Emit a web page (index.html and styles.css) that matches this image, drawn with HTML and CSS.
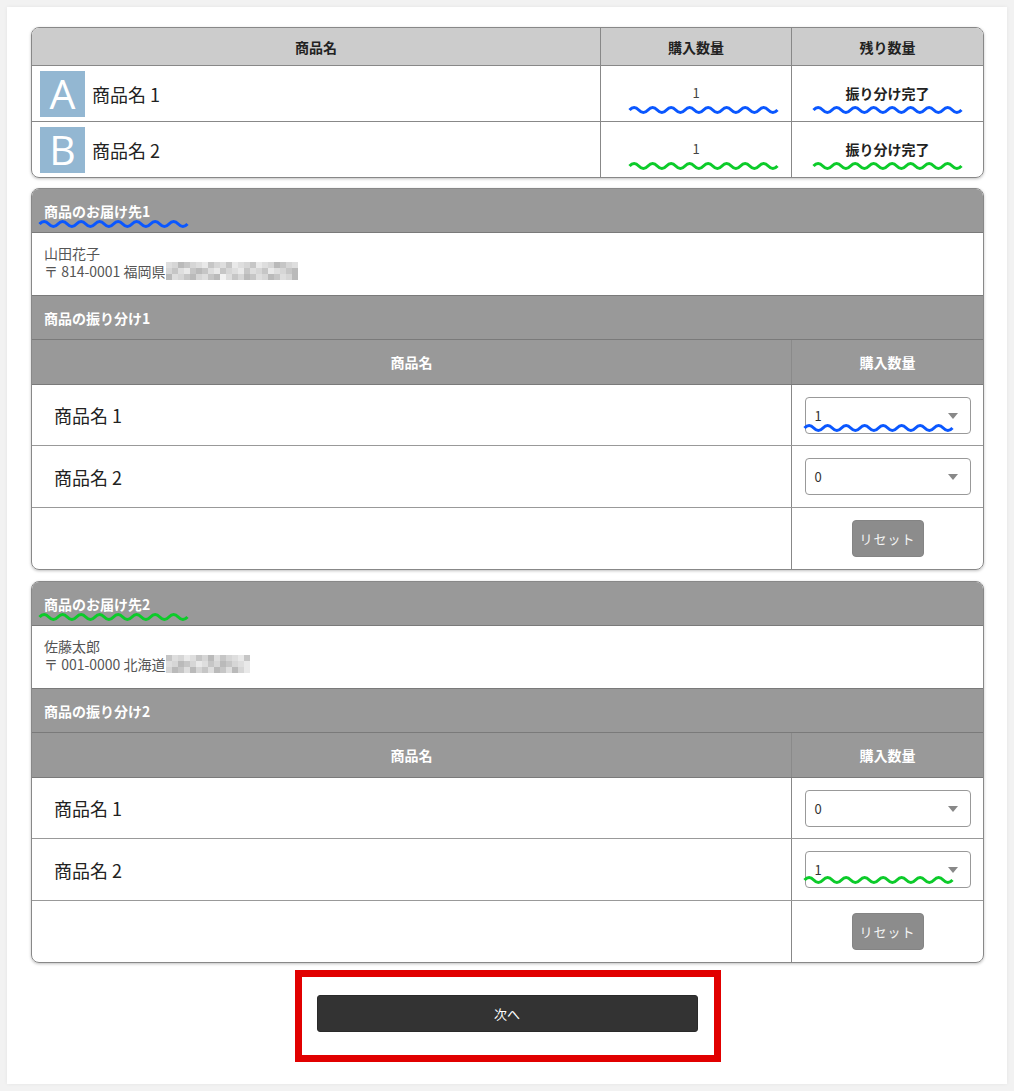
FILE: index.html
```html
<!DOCTYPE html>
<html lang="ja">
<head>
    <meta charset="UTF-8">
    <title>商品の振り分け</title>
    <link rel="stylesheet" href="styles.css">
</head>
<body>
    <svg class="defs" width="0" height="0">
        <symbol id="wave" viewBox="0 0 151 8">
            <path d="M1.5 4q4.6-5 9.25 0t9.25 0t9.25 0t9.25 0t9.25 0t9.25 0t9.25 0t9.25 0t9.25 0t9.25 0t9.25 0t9.25 0t9.25 0t9.25 0t9.25 0t9.25 0" fill="none" stroke="currentColor" stroke-width="3"/>
        </symbol>
    </svg>

    <div class="page">
        <!-- summary of purchased items -->
        <div class="box summary">
            <div class="srow shead">
                <div>商品名</div>
                <div>購入数量</div>
                <div>残り数量</div>
            </div>
            <div class="srow">
                <div class="item"><span class="badge">A</span>商品名 1</div>
                <div class="num">1<svg class="wave blue w-sum"><use href="#wave"/></svg></div>
                <div class="done">振り分け完了<svg class="wave blue w-done"><use href="#wave"/></svg></div>
            </div>
            <div class="srow">
                <div class="item"><span class="badge">B</span>商品名 2</div>
                <div class="num">1<svg class="wave green w-sum"><use href="#wave"/></svg></div>
                <div class="done">振り分け完了<svg class="wave green w-done"><use href="#wave"/></svg></div>
            </div>
        </div>

        <!-- destination 1 -->
        <div class="box card">
            <div class="card-head">商品のお届け先1<svg class="wave blue w-head"><use href="#wave"/></svg></div>
            <div class="address">
                山田花子<br>
                〒 814-0001 福岡県<span class="mosaic m22">
                    <i class="c"></i><i class="a"></i><i class="d"></i><i class="b"></i><i class="a"></i><i class="c"></i><i class="e"></i><i class="b"></i><i class="a"></i><i class="c"></i><i class="b"></i><i class="e"></i><i class="c"></i><i class="a"></i><i class="b"></i><i class="e"></i><i class="c"></i><i class="a"></i><i class="d"></i><i class="b"></i><i class="a"></i><i class="c"></i>
                    <i class="a"></i><i class="b"></i><i class="c"></i><i class="e"></i><i class="b"></i><i class="d"></i><i class="b"></i><i class="c"></i><i class="e"></i><i class="b"></i><i class="a"></i><i class="c"></i><i class="e"></i><i class="b"></i><i class="c"></i><i class="a"></i><i class="b"></i><i class="e"></i><i class="c"></i><i class="a"></i><i class="b"></i><i class="d"></i>
                    <i class="d"></i><i class="c"></i><i class="a"></i><i class="b"></i><i class="d"></i><i class="a"></i><i class="c"></i><i class="b"></i><i class="d"></i><i class="f"></i><i class="c"></i><i class="b"></i><i class="a"></i><i class="d"></i><i class="b"></i><i class="c"></i><i class="a"></i><i class="d"></i><i class="b"></i><i class="c"></i><i class="a"></i><i class="d"></i>
                </span>
            </div>
            <div class="card-head">商品の振り分け1</div>
            <div class="arow ahead">
                <div>商品名</div>
                <div>購入数量</div>
            </div>
            <div class="arow first">
                <div class="name">商品名 1</div>
                <div class="qty"><div class="select">1<span class="caret"></span></div><svg class="wave blue w-sel"><use href="#wave"/></svg></div>
            </div>
            <div class="arow">
                <div class="name">商品名 2</div>
                <div class="qty"><div class="select">0<span class="caret"></span></div></div>
            </div>
            <div class="arow">
                <div class="name"></div>
                <div class="qty"><button class="reset" type="button">リセット</button></div>
            </div>
        </div>

        <!-- destination 2 -->
        <div class="box card">
            <div class="card-head">商品のお届け先2<svg class="wave green w-head"><use href="#wave"/></svg></div>
            <div class="address">
                佐藤太郎<br>
                〒 001-0000 北海道<span class="mosaic m14">
                    <i class="b"></i><i class="c"></i><i class="a"></i><i class="e"></i><i class="c"></i><i class="b"></i><i class="a"></i><i class="d"></i><i class="c"></i><i class="b"></i><i class="a"></i><i class="c"></i><i class="e"></i><i class="b"></i>
                    <i class="c"></i><i class="a"></i><i class="d"></i><i class="b"></i><i class="a"></i><i class="e"></i><i class="c"></i><i class="b"></i><i class="a"></i><i class="d"></i><i class="b"></i><i class="a"></i><i class="c"></i><i class="e"></i>
                    <i class="a"></i><i class="d"></i><i class="b"></i><i class="c"></i><i class="d"></i><i class="a"></i><i class="b"></i><i class="c"></i><i class="d"></i><i class="b"></i><i class="c"></i><i class="d"></i><i class="a"></i><i class="e"></i>
                </span>
            </div>
            <div class="card-head">商品の振り分け2</div>
            <div class="arow ahead">
                <div>商品名</div>
                <div>購入数量</div>
            </div>
            <div class="arow first">
                <div class="name">商品名 1</div>
                <div class="qty"><div class="select">0<span class="caret"></span></div></div>
            </div>
            <div class="arow">
                <div class="name">商品名 2</div>
                <div class="qty"><div class="select">1<span class="caret"></span></div><svg class="wave green w-sel2"><use href="#wave"/></svg></div>
            </div>
            <div class="arow">
                <div class="name"></div>
                <div class="qty"><button class="reset" type="button">リセット</button></div>
            </div>
        </div>

        <div class="next-wrap">
            <div class="highlight">
                <button class="next" type="button">次へ</button>
            </div>
        </div>
    </div>
</body>
</html>
```

FILE: styles.css
```css
* {
    box-sizing: border-box;
}
html, body {
    margin: 0;
}
body {
    background-color: #f2f2f2;
    padding: 7px;
    font-family: "Noto Sans CJK JP", "Noto Sans", sans-serif;
    font-size: 14px;
    color: #222;
}
.defs {
    position: absolute;
}
.page {
    width: 1000px;
    height: 1077px;
    background-color: #fff;
    box-shadow: 0 0 4px rgba(0, 0, 0, 0.06);
    padding: 20px 23px 0 24px;
}

/* shared rounded box */
.box {
    border: 1px solid #888;
    border-radius: 8px;
    overflow: hidden;
    box-shadow: 0 1px 3px rgba(0, 0, 0, 0.25);
    margin-bottom: 10px;
}

/* summary table */
.srow {
    display: grid;
    grid-template-columns: 1fr 191px 192px;
    height: 56px;
    border-bottom: 1px solid #888;
}
.srow:last-child {
    border-bottom: none;
    height: 55px;
}
.srow > div {
    display: flex;
    align-items: center;
    justify-content: center;
    position: relative;
}
.srow > div + div {
    border-left: 1px solid #888;
}
.shead {
    height: 38px;
    background-color: #ccc;
    font-weight: bold;
}
.srow .item {
    justify-content: flex-start;
    padding-left: 8px;
    font-size: 18px;
    gap: 7px;
}
.badge {
    display: flex;
    align-items: center;
    justify-content: center;
    width: 45px;
    height: 46px;
    background-color: #93b7d2;
    color: #fff;
    font-family: "Open Sans", "Noto Sans", sans-serif;
    font-size: 41px;
    line-height: 1;
}
.num {
    color: #444;
    font-size: 13px;
    padding-bottom: 2px;
}
.done {
    font-weight: bold;
    padding-bottom: 2px;
}

/* annotation waves */
.wave {
    position: absolute;
    width: 151px;
    height: 8px;
}
.blue {
    color: #0a57ff;
}
.green {
    color: #0ccb2a;
}
.w-sum {
    left: 27px;
    top: 40px;
}
.w-done {
    left: 20px;
    top: 40px;
}
.w-head {
    left: 6px;
    top: 31px;
}
.w-sel {
    left: 11px;
    top: 39px;
}
.w-sel2 {
    left: 11px;
    top: 37px;
}

/* destination card */
.card {
    margin-bottom: 11px;
}
.card-head {
    position: relative;
    height: 44px;
    background-color: #999;
    border-bottom: 1px solid #7a7a7a;
    color: #fff;
    font-weight: bold;
    padding-left: 12px;
    display: flex;
    align-items: center;
}
.address {
    height: 63px;
    border-bottom: 1px solid #7a7a7a;
    padding: 11px 12px 0;
    color: #555;
    line-height: 18px;
}
.mosaic {
    display: inline-grid;
    grid-auto-rows: 6px;
    vertical-align: top;
}
.m22 {
    grid-template-columns: repeat(22, 6px);
}
.m14 {
    grid-template-columns: repeat(14, 6px);
}
.mosaic i {
    display: block;
}
.mosaic .a { background-color: #d6d6d6; }
.mosaic .b { background-color: #c6c6c6; }
.mosaic .c { background-color: #dedede; }
.mosaic .d { background-color: #bababa; }
.mosaic .e { background-color: #e9e9e9; }
.mosaic .f { background-color: #f2f2f2; }

.arow {
    display: grid;
    grid-template-columns: 1fr 192px;
    height: 62px;
    border-bottom: 1px solid #999;
}
.arow.first {
    height: 61px;
}
.arow:last-child {
    border-bottom: none;
    height: 61px;
}
.arow > div {
    display: flex;
    align-items: center;
    position: relative;
}
.arow > div + div {
    border-left: 1px solid #888;
}
.ahead {
    height: 45px;
    background-color: #999;
    border-bottom: 1px solid #7a7a7a;
    color: #fff;
    font-weight: bold;
}
.ahead > div {
    justify-content: center;
}
.ahead > div + div {
    border-left-color: #8a8a8a;
}
.name {
    padding-left: 22px;
    font-size: 18px;
}
.qty {
    justify-content: center;
}
.select {
    position: relative;
    width: 166px;
    height: 37px;
    border: 1px solid #999;
    border-radius: 4px;
    padding-left: 9px;
    display: flex;
    align-items: center;
    color: #333;
    font-size: 13px;
}
.caret {
    position: absolute;
    right: 12px;
    top: 15px;
    border-left: 5px solid transparent;
    border-right: 5px solid transparent;
    border-top: 6px solid #888;
}
.reset {
    width: 72px;
    height: 37px;
    background-color: #8c8c8c;
    border: 1px solid #848484;
    border-radius: 4px;
    color: #f4f4f4;
    font-family: inherit;
    font-size: 13px;
    letter-spacing: 1px;
    cursor: pointer;
}

/* next button */
.next-wrap {
    display: flex;
    justify-content: center;
}
.highlight {
    width: 426px;
    height: 92px;
    margin-top: -4px;
    border: 7px solid #e10000;
    padding: 18px 16px 0 15px;
}
.next {
    width: 100%;
    height: 37px;
    background-color: #333;
    border: 1px solid #2a2a2a;
    border-radius: 3px;
    color: #fff;
    font-family: inherit;
    font-size: 13px;
    cursor: pointer;
}
```
